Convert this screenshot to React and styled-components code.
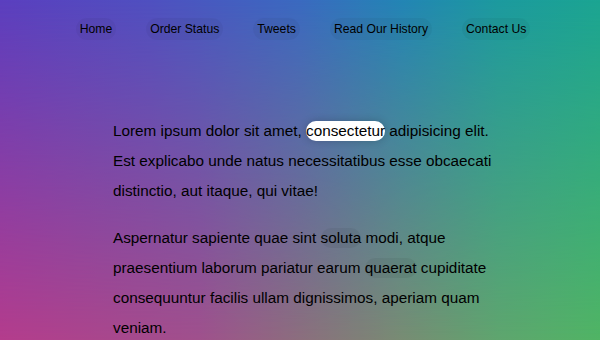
import React from "react";
import styled, { createGlobalStyle } from "styled-components";

const GlobalStyle = createGlobalStyle`
    *, *::before, *::after {
        box-sizing: border-box;
    }
    body {
        margin: 0;
        font-family: "Liberation Sans", Arial, sans-serif;
    }
`;

const menuItems = ["Home", "Order Status", "Tweets", "Read Our History", "Contact Us"];

function App() {
    return (
        <>
            <GlobalStyle />
            <Page>
                <nav>
                    <Menu>
                        {menuItems.map((item) => (
                            <li key={item}>
                                <MenuLink href="#">{item}</MenuLink>
                            </li>
                        ))}
                    </Menu>
                </nav>
                <Wrapper>
                    <Paragraph>
                        Lorem ipsum dolor sit amet, <TextLink href="#" $active>consectetur</TextLink> adipisicing
                        elit. Est explicabo unde natus necessitatibus esse obcaecati distinctio, aut itaque, qui vitae!
                    </Paragraph>
                    <Paragraph>
                        Aspernatur sapiente quae sint <TextLink href="#">soluta</TextLink> modi, atque praesentium
                        laborum pariatur earum <TextLink href="#">quaerat</TextLink> cupiditate consequuntur facilis
                        ullam dignissimos, aperiam quam veniam.
                    </Paragraph>
                </Wrapper>
            </Page>
        </>
    );
}

export default App;

const Page = styled.div`
    position: relative;
    isolation: isolate;
    height: 340px;
    overflow: hidden;
    background: linear-gradient(
        to right,
        #5b3fbf 0%,
        #4f50c0 25%,
        #3a6ac0 50%,
        #2385b5 67%,
        #1c9a9f 83%,
        #1ba592 100%
    );

    /* lower half of the wash, faded in towards the bottom */
    &::before {
        content: "";
        position: absolute;
        inset: 0;
        z-index: -1;
        background: linear-gradient(
            to right,
            #b43c8c 0%,
            #a0508c 33%,
            #8c6e7d 50%,
            #788c73 67%,
            #5fa56e 83%,
            #50b464 100%
        );
        -webkit-mask-image: linear-gradient(to bottom, transparent, #000);
        mask-image: linear-gradient(to bottom, transparent, #000);
    }
`;

const Menu = styled.ul`
    display: flex;
    justify-content: center;
    list-style: none;
    margin: 0 0 76px;
    padding: 18px 0 0 6px;
    font-size: 12.2px;
`;

const MenuLink = styled.a`
    display: inline-block;
    padding: 4px;
    margin: 0 15px;
    color: #000;
    text-decoration: none;
    background: rgba(0, 0, 0, 0.04);
    border-radius: 15px;
`;

const Wrapper = styled.div`
    max-width: 384px;
    margin: 0 0 0 calc(50% - 187px);
    font-size: 15.3px;
    line-height: 30px;
`;

const Paragraph = styled.p`
    margin: 17px 0;
    color: #000;
`;

const TextLink = styled.a`
    color: #000;
    text-decoration: none;
    border-radius: 15px;
    padding: 1px 0 2px;
    background: ${({ $active }) => ($active ? "#fff" : "rgba(0, 0, 0, 0.05)")};
    box-shadow: ${({ $active }) => ($active ? "0 0 8px rgba(0, 0, 0, 0.2)" : "none")};
`;
